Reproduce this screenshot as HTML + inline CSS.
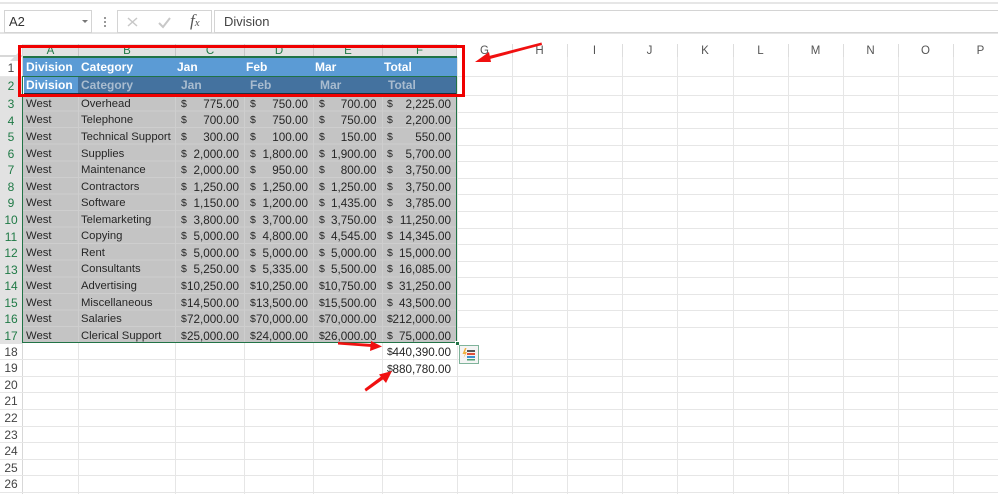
<!DOCTYPE html>
<html><head><meta charset="utf-8"><style>
html,body{margin:0;padding:0;background:#fff}
#p{position:relative;width:998px;height:494px;overflow:hidden;background:#fff;font-family:"Liberation Sans",sans-serif;font-size:11.3px;color:#262626;filter:blur(.3px)}
#p div,#p b,#p i{position:absolute;display:block;font-style:normal;font-weight:normal;white-space:nowrap}
.box{background:#fff;border:1px solid #d4d4d4;box-sizing:border-box}
.v{top:44px;bottom:0;width:1px;background:#e6e6e6}
.h{left:0;right:0;height:1px;background:#e6e6e6}
.ch{top:44px;height:13px;line-height:14px;text-align:center;font-size:11.500px;color:#1f7a46;background:#e2e2e2;border-right:1px solid #c6c6c6;box-sizing:border-box}
.cg{top:44px;height:13px;line-height:14px;text-align:center;font-size:11.500px;color:#555}
.rh{left:0;width:22px;text-align:center;font-size:12px;color:#444;height:16px;line-height:16px}
.rs{left:0;width:22px;text-align:center;font-size:12px;color:#1f7a46;background:#e2e2e2;height:17px;line-height:18px}
.r{left:23px;width:434px;height:17px;line-height:17px;margin-top:1px}
.a{left:3px}.b{left:58px}
.c,.d,.e,.f{text-align:right;font-size:11.700px}
.c{left:152px;width:64px}.d{left:221px;width:64px}.e{left:290px;width:63.500px}.f{left:359px;width:69px}
.c i,.d i,.e i,.f i{left:6px;font-size:10.500px}
.f i{left:5px}
.t{font-weight:bold!important;font-size:12px;height:19px;line-height:19px;color:#fff}
.u{font-weight:bold!important;font-size:12px;height:19px;line-height:19px;color:#a9bccf}
</style></head><body><div id="p">
<div style="left:0;right:0;top:2px;height:2px;background:#e6e6e6"></div>
<div style="left:0;right:0;top:32px;height:2px;background:#e4e4e4"></div>
<div class="box" style="left:4px;top:10px;width:88px;height:23px;font-size:13px;line-height:21px;padding-left:4px;color:#333">A2</div>
<div style="left:82px;top:20px;width:0;height:0;border:3px solid transparent;border-top:3px solid #777;border-bottom:0"></div>
<div style="left:104px;top:17px;width:2px;height:2px;background:#999;box-shadow:0 4px #999,0 8px #999"></div>
<div class="box" style="left:117px;top:10px;width:95px;height:23px"></div>
<svg style="position:absolute;left:117px;top:10px" width="95" height="23"><path d="M11 8l9 8M20 8l-9 8" stroke="#c8c8c8" stroke-width="1.500" fill="none"/><path d="M42 13l4 4 7-9" stroke="#c8c8c8" stroke-width="2" fill="none"/></svg>
<div style="left:190px;top:12px;font-family:'Liberation Serif',serif;font-style:italic;font-size:17px;line-height:17px;color:#555"><span style="font-style:italic">f</span><span style="font-size:11px">x</span></div>
<div class="box" style="left:214px;top:10px;width:790px;height:23px;font-size:13px;line-height:21px;padding-left:9px;color:#444">Division</div>

<div class="v" style="left:512px"></div><div class="v" style="left:567px"></div><div class="v" style="left:622px"></div><div class="v" style="left:677px"></div><div class="v" style="left:733px"></div><div class="v" style="left:788px"></div><div class="v" style="left:843px"></div><div class="v" style="left:898px"></div><div class="v" style="left:953px"></div>
<div class="v" style="left:457px"></div><div class="v" style="left:78px"></div><div class="v" style="left:175px"></div><div class="v" style="left:244px"></div><div class="v" style="left:313px"></div><div class="v" style="left:382px"></div><div class="v" style="left:22px;background:#d8d8d8"></div>
<div class="h" style="top:76px"></div><div class="h" style="top:95px"></div><div class="h" style="top:112px"></div><div class="h" style="top:128px"></div><div class="h" style="top:145px"></div><div class="h" style="top:161px"></div><div class="h" style="top:178px"></div><div class="h" style="top:194px"></div><div class="h" style="top:211px"></div><div class="h" style="top:228px"></div><div class="h" style="top:244px"></div><div class="h" style="top:261px"></div><div class="h" style="top:277px"></div><div class="h" style="top:294px"></div><div class="h" style="top:310px"></div><div class="h" style="top:327px"></div>
<div class="h" style="top:359px"></div><div class="h" style="top:376px"></div><div class="h" style="top:392px"></div><div class="h" style="top:409px"></div><div class="h" style="top:426px"></div><div class="h" style="top:442px"></div><div class="h" style="top:459px"></div><div class="h" style="top:475px"></div><div class="h" style="top:492px"></div>

<div style="left:0;right:0;top:55px;height:2px;background:#d8d8d8"></div>
<div class="cg" style="left:457px;width:55px;background:#fff">G</div><div class="cg" style="left:512px;width:55px;background:#fff">H</div><div class="cg" style="left:567px;width:55px;background:#fff">I</div><div class="cg" style="left:622px;width:55px;background:#fff">J</div><div class="cg" style="left:677px;width:56px;background:#fff">K</div><div class="cg" style="left:733px;width:55px;background:#fff">L</div><div class="cg" style="left:788px;width:55px;background:#fff">M</div><div class="cg" style="left:843px;width:55px;background:#fff">N</div><div class="cg" style="left:898px;width:55px;background:#fff">O</div><div class="cg" style="left:953px;width:55px;background:#fff">P</div>
<div class="v" style="left:512px;height:13px;bottom:auto;background:#ddd"></div><div class="v" style="left:567px;height:13px;bottom:auto;background:#ddd"></div><div class="v" style="left:622px;height:13px;bottom:auto;background:#ddd"></div><div class="v" style="left:677px;height:13px;bottom:auto;background:#ddd"></div><div class="v" style="left:733px;height:13px;bottom:auto;background:#ddd"></div><div class="v" style="left:788px;height:13px;bottom:auto;background:#ddd"></div><div class="v" style="left:843px;height:13px;bottom:auto;background:#ddd"></div><div class="v" style="left:898px;height:13px;bottom:auto;background:#ddd"></div><div class="v" style="left:953px;height:13px;bottom:auto;background:#ddd"></div>

<div style="left:10px;top:50px;width:0;height:0;border-left:11px solid transparent;border-bottom:11px solid #dcdcdc"></div>
<div class="ch" style="left:23px;width:56px">A</div><div class="ch" style="left:79px;width:97px">B</div><div class="ch" style="left:176px;width:69px">C</div><div class="ch" style="left:245px;width:69px">D</div><div class="ch" style="left:314px;width:69px">E</div><div class="ch" style="left:383px;width:74px">F</div>
<div style="left:23px;top:56px;width:434px;height:2px;background:#217346"></div>

<div class="rh" style="top:58px;height:19px;line-height:20px">1</div>
<div class="rs" style="top:77px;height:18px;line-height:18px">2</div>
<div class="rs" style="top:95px">3</div><div class="rs" style="top:112px">4</div><div class="rs" style="top:128px">5</div><div class="rs" style="top:145px">6</div><div class="rs" style="top:161px">7</div><div class="rs" style="top:178px">8</div><div class="rs" style="top:194px">9</div><div class="rs" style="top:211px">10</div><div class="rs" style="top:228px">11</div><div class="rs" style="top:244px">12</div><div class="rs" style="top:261px">13</div><div class="rs" style="top:277px">14</div><div class="rs" style="top:294px">15</div><div class="rs" style="top:310px">16</div><div class="rs" style="top:327px">17</div>
<div class="rh" style="top:344px">18</div><div class="rh" style="top:360px">19</div><div class="rh" style="top:377px">20</div><div class="rh" style="top:393px">21</div><div class="rh" style="top:410px">22</div><div class="rh" style="top:427px">23</div><div class="rh" style="top:443px">24</div><div class="rh" style="top:460px">25</div><div class="rh" style="top:476px">26</div>

<div style="left:23px;top:58px;width:434px;height:19px;background:#5b9bd5">
<b class="t" style="left:3px">Division</b><b class="t" style="left:58px">Category</b><b class="t" style="left:154px">Jan</b><b class="t" style="left:223px">Feb</b><b class="t" style="left:292px">Mar</b><b class="t" style="left:361px">Total</b></div>
<div style="left:23px;top:77px;width:434px;height:18px;background:#44729f">
<div style="left:0;top:0;width:55px;height:18px;background:#5b9bd5"></div>
<div style="left:0;bottom:0;width:434px;height:2px;background:#1e2f42"></div>
<b class="t" style="left:3px;top:-1px">Division</b><b class="u" style="left:58px;top:-1px">Category</b><b class="u" style="left:158px;top:-1px">Jan</b><b class="u" style="left:227px;top:-1px">Feb</b><b class="u" style="left:297px;top:-1px">Mar</b><b class="u" style="left:365px;top:-1px">Total</b></div>

<div style="left:23px;top:95px;width:434px;height:248px;background:#c4c4c4"></div>
<div style="left:23px;top:95px;width:434px;height:248px;background:repeating-linear-gradient(to bottom,transparent 0,transparent 15.570px,#cecece 15.570px,#cecece 16.570px)"></div>
<div style="left:78px;top:95px;width:1px;height:248px;background:#cecece"></div><div style="left:175px;top:95px;width:1px;height:248px;background:#cecece"></div><div style="left:244px;top:95px;width:1px;height:248px;background:#cecece"></div><div style="left:313px;top:95px;width:1px;height:248px;background:#cecece"></div><div style="left:382px;top:95px;width:1px;height:248px;background:#cecece"></div>

<div class="r" style="top:95px"><b class="a">West</b><b class="b">Overhead</b><b class="c"><i>$</i>775.00</b><b class="d"><i>$</i>750.00</b><b class="e"><i>$</i>700.00</b><b class="f"><i>$</i>2,225.00</b></div>
<div class="r" style="top:111px"><b class="a">West</b><b class="b">Telephone</b><b class="c"><i>$</i>700.00</b><b class="d"><i>$</i>750.00</b><b class="e"><i>$</i>750.00</b><b class="f"><i>$</i>2,200.00</b></div>
<div class="r" style="top:128px"><b class="a">West</b><b class="b">Technical Support</b><b class="c"><i>$</i>300.00</b><b class="d"><i>$</i>100.00</b><b class="e"><i>$</i>150.00</b><b class="f"><i>$</i>550.00</b></div>
<div class="r" style="top:145px"><b class="a">West</b><b class="b">Supplies</b><b class="c"><i>$</i>2,000.00</b><b class="d"><i>$</i>1,800.00</b><b class="e"><i>$</i>1,900.00</b><b class="f"><i>$</i>5,700.00</b></div>
<div class="r" style="top:161px"><b class="a">West</b><b class="b">Maintenance</b><b class="c"><i>$</i>2,000.00</b><b class="d"><i>$</i>950.00</b><b class="e"><i>$</i>800.00</b><b class="f"><i>$</i>3,750.00</b></div>
<div class="r" style="top:178px"><b class="a">West</b><b class="b">Contractors</b><b class="c"><i>$</i>1,250.00</b><b class="d"><i>$</i>1,250.00</b><b class="e"><i>$</i>1,250.00</b><b class="f"><i>$</i>3,750.00</b></div>
<div class="r" style="top:194px"><b class="a">West</b><b class="b">Software</b><b class="c"><i>$</i>1,150.00</b><b class="d"><i>$</i>1,200.00</b><b class="e"><i>$</i>1,435.00</b><b class="f"><i>$</i>3,785.00</b></div>
<div class="r" style="top:211px"><b class="a">West</b><b class="b">Telemarketing</b><b class="c"><i>$</i>3,800.00</b><b class="d"><i>$</i>3,700.00</b><b class="e"><i>$</i>3,750.00</b><b class="f"><i>$</i>11,250.00</b></div>
<div class="r" style="top:227px"><b class="a">West</b><b class="b">Copying</b><b class="c"><i>$</i>5,000.00</b><b class="d"><i>$</i>4,800.00</b><b class="e"><i>$</i>4,545.00</b><b class="f"><i>$</i>14,345.00</b></div>
<div class="r" style="top:244px"><b class="a">West</b><b class="b">Rent</b><b class="c"><i>$</i>5,000.00</b><b class="d"><i>$</i>5,000.00</b><b class="e"><i>$</i>5,000.00</b><b class="f"><i>$</i>15,000.00</b></div>
<div class="r" style="top:260px"><b class="a">West</b><b class="b">Consultants</b><b class="c"><i>$</i>5,250.00</b><b class="d"><i>$</i>5,335.00</b><b class="e"><i>$</i>5,500.00</b><b class="f"><i>$</i>16,085.00</b></div>
<div class="r" style="top:277px"><b class="a">West</b><b class="b">Advertising</b><b class="c"><i>$</i>10,250.00</b><b class="d"><i>$</i>10,250.00</b><b class="e"><i>$</i>10,750.00</b><b class="f"><i>$</i>31,250.00</b></div>
<div class="r" style="top:294px"><b class="a">West</b><b class="b">Miscellaneous</b><b class="c"><i>$</i>14,500.00</b><b class="d"><i>$</i>13,500.00</b><b class="e"><i>$</i>15,500.00</b><b class="f"><i>$</i>43,500.00</b></div>
<div class="r" style="top:310px"><b class="a">West</b><b class="b">Salaries</b><b class="c"><i>$</i>72,000.00</b><b class="d"><i>$</i>70,000.00</b><b class="e"><i>$</i>70,000.00</b><b class="f"><i>$</i>212,000.00</b></div>
<div class="r" style="top:327px"><b class="a">West</b><b class="b">Clerical Support</b><b class="c"><i>$</i>25,000.00</b><b class="d"><i>$</i>24,000.00</b><b class="e"><i>$</i>26,000.00</b><b class="f"><i>$</i>75,000.00</b></div>
<div class="r" style="top:343px"><b class="f"><i>$</i>440,390.00</b></div>
<div class="r" style="top:360px"><b class="f"><i>$</i>880,780.00</b></div>

<div style="left:22px;top:76px;width:435px;height:267px;border:1px solid #217346;box-sizing:border-box"></div>
<div style="left:23px;top:77px;width:1px;height:18px;background:#fff"></div>
<div style="left:455px;top:341px;width:5px;height:5px;background:#217346;border:1px solid #fff;box-sizing:border-box"></div>

<div style="left:459px;top:345px;width:20px;height:19px;border:1px solid #7fb39a;box-sizing:border-box;background:#f4f4f4"></div>
<svg style="position:absolute;left:459px;top:345px" width="20" height="19"><path d="M6 3L3.500 9H6L4.500 13L8 7H6L7.500 3Z" fill="#f0b040"/><rect x="8" y="5" width="8" height="2" fill="#555"/><rect x="8" y="8" width="8" height="2" fill="#e0503a"/><rect x="8" y="11" width="8" height="2" fill="#3a8fd0"/><rect x="8" y="14" width="8" height="1.500" fill="#4aa070"/></svg>

<svg style="position:absolute;left:0;top:0" width="998" height="494">
<rect x="19.500" y="46.500" width="444" height="49" fill="none" stroke="#f00000" stroke-width="3"/>
<path d="M541.500 42.500L542 45L488 59.500L487 56.500Z" fill="#f01010"/>
<path d="M475 62L489 52L491 62Z" fill="#f01010"/>
<path d="M338 342L338 344.500L372 347L372 344Z" fill="#f01010"/>
<path d="M382 346.500L371 341L370 351Z" fill="#f01010"/>
<path d="M364.500 389L366 391.500L385 378L383 375Z" fill="#f01010"/>
<path d="M392 371L379 374.500L386 383Z" fill="#f01010"/>
</svg>
</div></body></html>
